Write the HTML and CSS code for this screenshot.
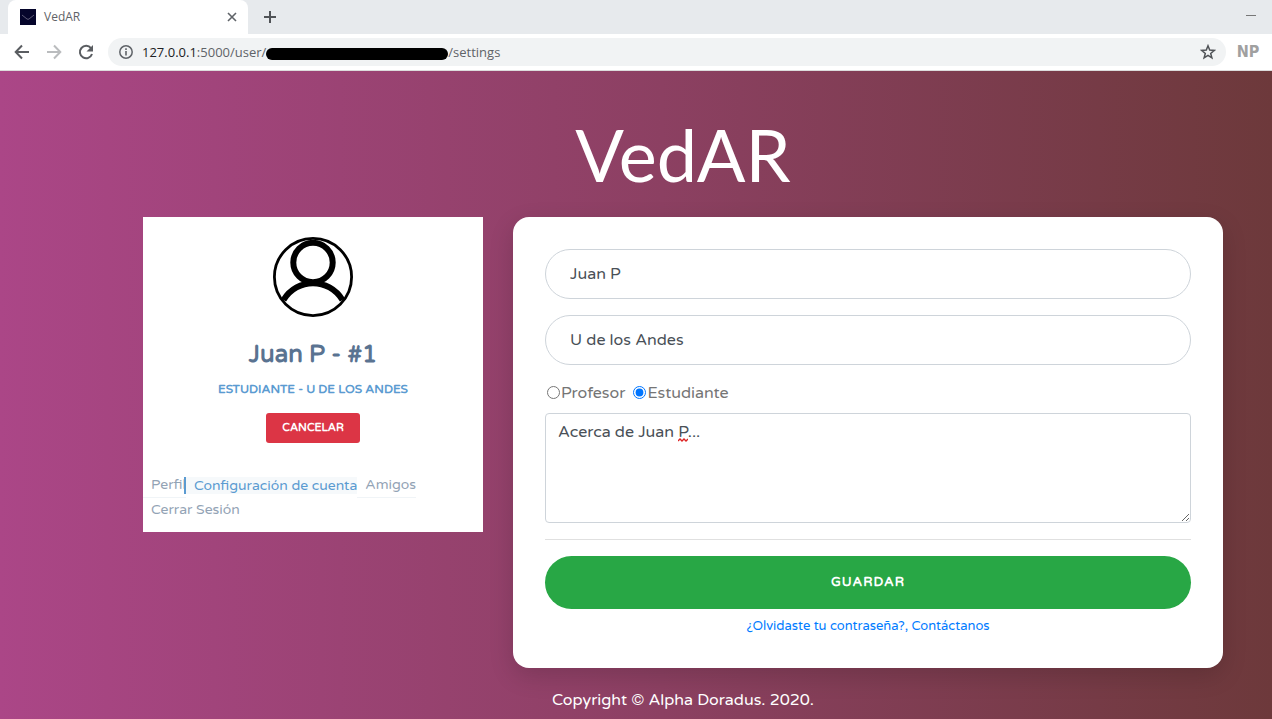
FILE: index.html
```html
<!DOCTYPE html>
<html lang="es">
<head>
<meta charset="utf-8">
<title>VedAR</title>
<link rel="stylesheet" href="styles.css">
</head>
<body>
<header class="browser">
  <div class="tabstrip">
    <div class="tab">
      <svg class="favicon" width="16" height="16" viewBox="0 0 16 16"><path fill="#05052b" d="M0 0h16v16H0z"/><path d="M2 6l5 4q1 .6 2 0l5-4" fill="none" stroke="#5d5b76"/></svg>
      <span class="tab-title">VedAR</span>
      <button class="icon-btn" aria-label="Cerrar pestaña"><svg width="10" height="10" viewBox="0 0 10 10"><path d="M1 1l8 8M9 1L1 9" stroke="#5f6368" stroke-width="1.6"/></svg></button>
    </div>
    <button class="icon-btn new-tab" aria-label="Nueva pestaña"><svg width="14" height="14" viewBox="0 0 14 14"><path d="M7 1v12M1 7h12" stroke="#505357" stroke-width="2"/></svg></button>
    <button class="icon-btn minimize" aria-label="Minimizar"><svg width="10" height="10" viewBox="0 0 10 10"><path d="M0 3.500h10" stroke="#777"/></svg></button>
  </div>
  <div class="toolbar">
    <button class="icon-btn" aria-label="Atrás"><svg width="16" height="16" viewBox="0 0 16 16" fill="none" stroke="#5a5d61" stroke-width="2"><path d="M15 8H2M8 1.500L1.700 8 8 14.500"/></svg></button>
    <button class="icon-btn" aria-label="Adelante"><svg width="16" height="16" viewBox="0 0 16 16" fill="none" stroke="#babcbe" stroke-width="2"><path d="M1 8h13M8 1.500L14.300 8 8 14.500"/></svg></button>
    <button class="icon-btn" aria-label="Recargar"><svg width="16" height="16" viewBox="0 0 16 16"><path d="M13 4.200A6.200 6.200 0 1 0 14 10" fill="none" stroke="#5a5d61" stroke-width="2"/><path d="M15 1v6.500H8.500z" fill="#5a5d61"/></svg></button>
    <div class="address">
      <svg width="14" height="14" viewBox="0 0 14 14"><circle cx="7" cy="7" r="6.200" fill="none" stroke="#5f6368" stroke-width="1.500"/><path d="M7 6v4.500M7 3.300v1.600" stroke="#5f6368" stroke-width="1.600"/></svg>
      <div class="url"><span class="host">127.0.0.1</span>:5000/user/<span class="redaction"></span>/settings</div>
      <button class="icon-btn star" aria-label="Añadir a favoritos"><svg width="16" height="16" viewBox="0 0 16 16"><path d="M8 1.800l1.700 4.300 4.600.3-3.600 3 1.200 4.500L8 11.400l-3.900 2.500 1.200-4.500-3.600-3 4.600-.3z" fill="none" stroke="#505357" stroke-width="1.500"/></svg></button>
    </div>
    <button class="icon-btn extension">NP</button>
  </div>
</header>
<main class="page">
  <h1 class="brand">VedAR</h1>
  <div class="columns">
    <aside class="profile">
      <svg class="avatar" width="80" height="80" viewBox="0 0 80 80"><g fill="none" stroke="#000"><circle cx="40" cy="40" r="38.600" stroke-width="2.800"/><circle cx="40" cy="25.500" r="19.700" stroke-width="6"/><path d="M10.500 63C24 40.500 56 40.500 69.500 63" stroke-width="6"/></g></svg>
      <h2 class="profile-name">Juan P - #1</h2>
      <p class="profile-role">Estudiante - U de los Andes</p>
      <button class="cancel">Cancelar</button>
      <nav class="menu">
        <a href="#">Perfil</a><a href="#" class="active">Configuración de cuenta</a><a href="#">Amigos</a><a href="#" class="last">Cerrar Sesión</a>
      </nav>
    </aside>
    <form class="card">
      <input class="pill" type="text" aria-label="Nombre" value="Juan P">
      <input class="pill" type="text" aria-label="Universidad" value="U de los Andes">
      <div class="roles">
        <label><input type="radio" name="role">Profesor</label>
        <label><input type="radio" name="role" checked>Estudiante</label>
      </div>
      <div class="about-field">
        <textarea class="about" aria-label="Acerca de">Acerca de Juan P...</textarea>
        <svg class="squiggle" width="10" height="4" viewBox="0 0 10 4"><path d="M0 3l2-2 2 2 2-2 2 2 2-2" fill="none" stroke="#d22" stroke-width="1.300"/></svg>
      </div>
      <hr class="rule">
      <button class="save" type="button">Guardar</button>
      <a class="help" href="#">¿Olvidaste tu contraseña?, Contáctanos</a>
    </form>
  </div>
  <footer class="copyright">Copyright © Alpha Doradus. 2020.</footer>
</main>
</body>
</html>
```
FILE: styles.css
```css
* { box-sizing: border-box; }
body {
  margin: 0;
  min-height: 100vh;
  display: flex;
  flex-direction: column;
  font: 16px/24px "Varela Round", "Noto Sans", sans-serif;
  color: #757575;
}
a { text-decoration: none; }
button, input, textarea { font-family: inherit; }
.browser { font: 14px/20px "Open Sans", sans-serif; background: #fff; border-bottom: 1px solid #dcdcdc; }
.tabstrip { display: flex; align-items: center; height: 34px; padding: 0 16px 0 8px; background: #e7eaed; }
.tab { display: flex; align-items: center; gap: 8px; width: 240px; height: 34px; padding: 0 11px 0 12px; border-radius: 8px 8px 0 0; background: #fff; }
.tab-title { flex: 1; font-size: 12px; color: #5f6368; }
.icon-btn { display: flex; padding: 0; border: 0; background: none; }
.new-tab { margin-left: 15px; }
.minimize { margin-left: auto; }
.toolbar { display: flex; align-items: center; gap: 16px; height: 36px; padding: 0 16px 0 14px; }
.address { flex: 1; display: flex; align-items: center; gap: 9px; height: 28px; margin-left: -2px; padding: 0 10px 0 11px; border-radius: 14px; background: #f1f3f4; }
.url { display: flex; align-items: center; font-size: 13px; color: #5f6368; }
.host { color: #202124; }
.redaction { width: 182px; height: 12px; margin-top: 4px; border-radius: 6px; background: #000; }
.star { margin-left: auto; }
.extension { width: 16px; margin-left: -2px; justify-content: center; font: 700 16px/20px "Liberation Sans Narrow", "DejaVu Sans Condensed", sans-serif; color: #a0a0a0; }
.page {
  flex: 1;
  padding: 35px 49px 7px 143px;
  background: linear-gradient(to right, #ab4687, #8c4062 52%, #6d393b);
}
.brand { margin: 0; font: 400 72px/96px Lato, sans-serif; text-align: center; color: #fff; }
.columns { display: grid; grid-template-columns: 340fr 710fr; gap: 30px; align-items: start; margin-top: 15px; }
.profile { display: flex; flex-direction: column; align-items: center; padding: 20px 0 10px; background: #fff; }
.profile-name { margin: 25px 0 0; font-size: 24px; line-height: 26px; font-weight: 700; color: #5a7391; }
.profile-role { margin: 11px 0 0; font-size: 12px; line-height: 20px; font-weight: 700; text-transform: uppercase; color: #5b9bd1; }
.cancel { margin-top: 14px; height: 30px; padding: 0 16px 2px; border: 0; border-radius: 3px; background: #dc3545; color: #fff; font-size: 11px; font-weight: 700; text-transform: uppercase; }
.menu { display: flex; flex-wrap: wrap; align-self: stretch; margin-top: 30px; font-size: 14px; line-height: 24px; }
.menu a { padding-left: 8px; border-bottom: 1px solid #f0f4f7; color: #93a3b5; }
.menu .active { margin: 4px 0 4px -2px; border-left: 2px solid #5b9bd1; border-bottom: 0; background: #f6f9fb; line-height: 17px; color: #5b9bd1; }
.menu .last { border-bottom: 0; }
.card { display: flex; flex-direction: column; padding: 32px; border-radius: 16px; background: #fff; box-shadow: 0 8px 24px rgba(0, 0, 0, .15); }
.pill { width: 100%; height: 50px; margin-bottom: 16px; padding: 0 24px; border: 1px solid #ced4da; border-radius: 25px; background: #fff; font-size: 16px; color: #495057; }
.roles { display: flex; gap: 6px; }
.roles label { display: flex; align-items: center; }
.roles input { width: 13px; height: 13px; margin: 0 1px 2px 2px; }
.about-field { position: relative; display: grid; margin-top: 8px; }
.about { height: 110px; padding: 6px 12px; border: 1px solid #ced4da; border-radius: 4px; font-size: 16px; line-height: 24px; color: #495057; resize: vertical; }
.squiggle { position: absolute; left: 133px; top: 25px; }
.rule { width: 100%; margin: 16px 0; border: 0; border-top: 1px solid #e0e0e0; }
.save { height: 53px; padding: 0 0 2px; border: 0; border-radius: 27px; background: #28a745; color: #fff; font-size: 13px; font-weight: 700; letter-spacing: 1px; text-transform: uppercase; }
.help { align-self: center; margin-top: 7px; font-size: 13px; line-height: 20px; color: #007bff; }
.copyright { margin-top: 20px; text-align: center; color: #fff; }
```
